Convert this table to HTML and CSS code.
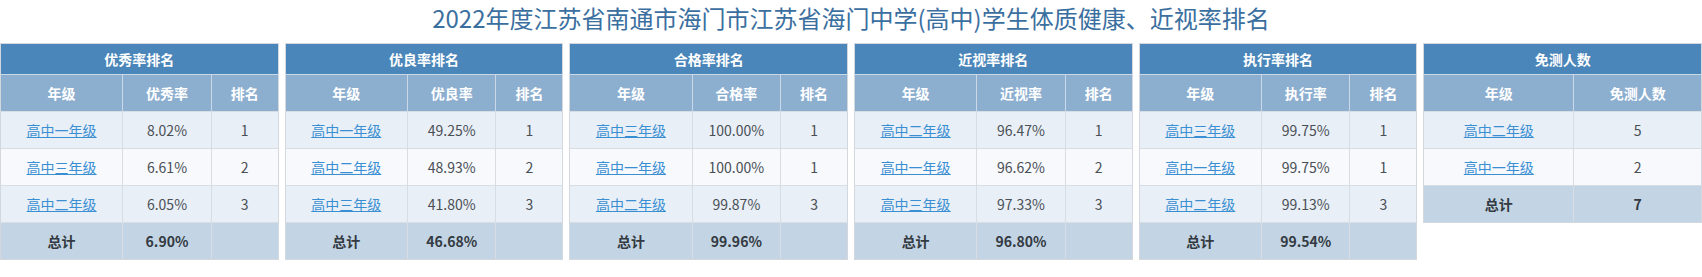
FILE: index.html
```html
<!DOCTYPE html>
<html lang="zh-CN">
<head>
<meta charset="utf-8">
<title>排名</title>
<link rel="stylesheet" href="styles.css">
</head>
<body>
<h1 class="title">2022年度江苏省南通市海门市江苏省海门中学(高中)学生体质健康、近视率排名</h1>
<div class="boards">
  <div class="panel">
    <table class="rank">
      <colgroup><col class="c-grade"><col class="c-rate"><col class="c-rank"></colgroup>
      <tr class="cap"><th colspan="3">优秀率排名</th></tr>
      <tr class="heads"><th>年级</th><th>优秀率</th><th>排名</th></tr>
      <tr class="odd"><td><a href="#">高中一年级</a></td><td>8.02%</td><td>1</td></tr>
      <tr class="even"><td><a href="#">高中三年级</a></td><td>6.61%</td><td>2</td></tr>
      <tr class="odd"><td><a href="#">高中二年级</a></td><td>6.05%</td><td>3</td></tr>
      <tr class="total"><td>总计</td><td>6.90%</td><td></td></tr>
    </table>
  </div>
  <div class="panel">
    <table class="rank">
      <colgroup><col class="c-grade"><col class="c-rate"><col class="c-rank"></colgroup>
      <tr class="cap"><th colspan="3">优良率排名</th></tr>
      <tr class="heads"><th>年级</th><th>优良率</th><th>排名</th></tr>
      <tr class="odd"><td><a href="#">高中一年级</a></td><td>49.25%</td><td>1</td></tr>
      <tr class="even"><td><a href="#">高中二年级</a></td><td>48.93%</td><td>2</td></tr>
      <tr class="odd"><td><a href="#">高中三年级</a></td><td>41.80%</td><td>3</td></tr>
      <tr class="total"><td>总计</td><td>46.68%</td><td></td></tr>
    </table>
  </div>
  <div class="panel">
    <table class="rank">
      <colgroup><col class="c-grade"><col class="c-rate"><col class="c-rank"></colgroup>
      <tr class="cap"><th colspan="3">合格率排名</th></tr>
      <tr class="heads"><th>年级</th><th>合格率</th><th>排名</th></tr>
      <tr class="odd"><td><a href="#">高中三年级</a></td><td>100.00%</td><td>1</td></tr>
      <tr class="even"><td><a href="#">高中一年级</a></td><td>100.00%</td><td>1</td></tr>
      <tr class="odd"><td><a href="#">高中二年级</a></td><td>99.87%</td><td>3</td></tr>
      <tr class="total"><td>总计</td><td>99.96%</td><td></td></tr>
    </table>
  </div>
  <div class="panel">
    <table class="rank">
      <colgroup><col class="c-grade"><col class="c-rate"><col class="c-rank"></colgroup>
      <tr class="cap"><th colspan="3">近视率排名</th></tr>
      <tr class="heads"><th>年级</th><th>近视率</th><th>排名</th></tr>
      <tr class="odd"><td><a href="#">高中二年级</a></td><td>96.47%</td><td>1</td></tr>
      <tr class="even"><td><a href="#">高中一年级</a></td><td>96.62%</td><td>2</td></tr>
      <tr class="odd"><td><a href="#">高中三年级</a></td><td>97.33%</td><td>3</td></tr>
      <tr class="total"><td>总计</td><td>96.80%</td><td></td></tr>
    </table>
  </div>
  <div class="panel">
    <table class="rank">
      <colgroup><col class="c-grade"><col class="c-rate"><col class="c-rank"></colgroup>
      <tr class="cap"><th colspan="3">执行率排名</th></tr>
      <tr class="heads"><th>年级</th><th>执行率</th><th>排名</th></tr>
      <tr class="odd"><td><a href="#">高中三年级</a></td><td>99.75%</td><td>1</td></tr>
      <tr class="even"><td><a href="#">高中一年级</a></td><td>99.75%</td><td>1</td></tr>
      <tr class="odd"><td><a href="#">高中二年级</a></td><td>99.13%</td><td>3</td></tr>
      <tr class="total"><td>总计</td><td>99.54%</td><td></td></tr>
    </table>
  </div>
  <div class="panel">
    <table class="rank">
      <colgroup><col class="c-grade-wide"><col class="c-count"></colgroup>
      <tr class="cap"><th colspan="2">免测人数</th></tr>
      <tr class="heads"><th>年级</th><th>免测人数</th></tr>
      <tr class="odd"><td><a href="#">高中二年级</a></td><td>5</td></tr>
      <tr class="even"><td><a href="#">高中一年级</a></td><td>2</td></tr>
      <tr class="total"><td>总计</td><td>7</td></tr>
    </table>
  </div>
</div>
</body>
</html>
```

FILE: styles.css
```css
body {
  margin: 0;
  background: #ffffff;
  font-family: "Noto Sans CJK SC", "Noto Sans", sans-serif;
}

.title {
  margin: 0 0 7px;
  font-size: 24px;
  font-weight: normal;
  line-height: 36px;
  text-align: center;
  color: #3b6f9f;
}

.boards {
  display: flex;
  gap: 6px;
  align-items: flex-start;
}

.panel {
  flex: 1 1 0;
  min-width: 0;
  border: 1px solid #d3d8de;
}

.rank {
  width: 100%;
  border-collapse: collapse;
  table-layout: fixed;
  font-size: 14px;
  line-height: 20px;
}

.c-grade { width: 44%; }
.c-rate { width: 32%; }
.c-rank { width: 24%; }
.c-grade-wide { width: 54%; }
.c-count { width: 46%; }

.rank th,
.rank td {
  text-align: center;
  padding: 0;
  white-space: nowrap;
}

.cap th {
  height: 30px;
  background: #4a86b9;
  color: #ffffff;
  font-weight: bold;
  border-bottom: 1px solid #c9d9e8;
}

.heads th {
  height: 36px;
  background: #8caecf;
  color: #ffffff;
  font-weight: bold;
  border-left: 1px solid #c9d9e8;
}

.heads th:first-child {
  border-left: 0;
}

.rank td {
  height: 36px;
  color: #4a4f56;
  border-top: 1px solid #d8dde3;
  border-left: 1px solid #d8dde3;
}

.rank td:first-child {
  border-left: 0;
}

.odd td {
  background: #e9eff7;
}

.even td {
  background: #f7f9fc;
}

.total td {
  background: #c3d5e4;
  color: #333a42;
  font-weight: bold;
}

.rank a {
  color: #3a8fd3;
  text-decoration: underline;
}
```
